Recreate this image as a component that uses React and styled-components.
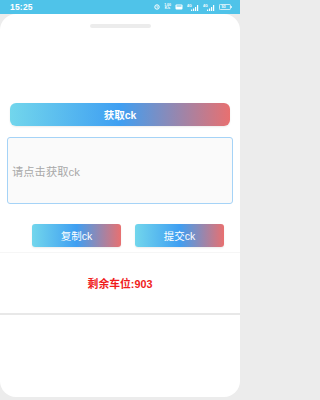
import React from 'react'
import styled, { createGlobalStyle } from 'styled-components'

const GlobalStyle = createGlobalStyle`
  html, body {
    margin: 0;
    padding: 0;
    background: #ececec;
    font-family: "Liberation Sans", "Noto Sans CJK SC", sans-serif;
  }
`

const Screen = styled.div`
  width: 240px;
  height: 400px;
  background: #ececec;
  overflow: hidden;
`

const StatusBar = styled.div`
  height: 14px;
  background: #4fc3e9;
  display: flex;
  align-items: center;
  justify-content: space-between;
  padding: 0 8px 0 10px;
  color: #fff;
  .time {
    font-size: 8.5px;
    font-weight: bold;
    letter-spacing: 0.2px;
  }
  .icons {
    display: flex;
    align-items: center;
    gap: 4px;
  }
  .speed {
    font-size: 3.5px;
    line-height: 3.5px;
    text-align: center;
    font-weight: bold;
  }
`

const Sheet = styled.div`
  background: #fff;
  height: 383px;
  border-radius: 16px;
  overflow: hidden;
  display: flex;
  flex-direction: column;
`

const Handle = styled.div`
  width: 61px;
  height: 4px;
  border-radius: 2px;
  background: #ececec;
  margin: 10px auto 0;
`

const GradientButton = styled.button`
  border: none;
  height: 23px;
  width: ${p => p.$width}px;
  border-radius: ${p => p.$radius}px;
  background: linear-gradient(90deg, #72d6ec 0%, #3f9ff2 50%, #e87070 100%);
  color: #fff;
  font-family: "Liberation Sans", "Noto Sans CJK SC", sans-serif;
  font-size: 10.5px;
  font-weight: ${p => (p.$bold ? 'bold' : 'normal')};
  padding: 0;
  box-shadow: 0 1px 2px rgba(0, 0, 0, 0.08);
`

const TopButton = styled(GradientButton)`
  margin: 75px 0 0 10px;
`

const Input = styled.div`
  margin: 11px 0 0 7px;
  width: 220px;
  height: 65px;
  border: 1px solid #a5d3f7;
  border-radius: 3px;
  background: #fafafa;
  display: flex;
  align-items: center;
  padding-left: 4px;
  color: #a8a8a8;
  font-size: 11.3px;
`

const ButtonRow = styled.div`
  display: flex;
  gap: 14px;
  padding-left: 32px;
  margin-top: 20px;
`

const InfoSection = styled.div`
  margin-top: 5px;
  border-top: 1px solid #f6f6f6;
  height: 61px;
  display: flex;
  justify-content: center;
  padding-top: 25px;
  box-sizing: border-box;
`

const Remain = styled.span`
  color: #f01c1c;
  font-size: 10.8px;
  font-weight: bold;
  line-height: 12px;
`

const Divider = styled.div`
  height: 2px;
  background: #e8e8e8;
`

function NetIcon() {
  return (
    <svg width="12" height="7" viewBox="0 0 12 7">
      <text x="0" y="3" fontSize="3.5" fill="#fff" fontFamily="Liberation Sans" fontWeight="bold">4G</text>
      <path d="M4 7h1.2V5.5H4zM6 7h1.2V4.5H6zM8 7h1.2V3H8zM10 7h1.2V1H10z" fill="#fff" />
    </svg>
  )
}

function StatusIcons() {
  return (
    <div className="icons">
      <svg width="6" height="6" viewBox="0 0 6 6">
        <circle cx="3" cy="3" r="2.2" fill="none" stroke="#fff" strokeWidth="1" />
        <path d="M3 1.8v1.4h1" stroke="#fff" strokeWidth="0.7" fill="none" />
      </svg>
      <div className="speed">1.00<br />K/s</div>
      <svg width="8" height="6" viewBox="0 0 8 6">
        <rect x="0.5" y="0.5" width="7" height="5" rx="1" fill="#fff" />
        <rect x="1.5" y="1.5" width="5" height="1" fill="#4fc3e9" />
      </svg>
      <NetIcon />
      <NetIcon />
      <svg width="13" height="6" viewBox="0 0 13 6">
        <rect x="0.4" y="0.4" width="11" height="5.2" rx="1" fill="none" stroke="#fff" strokeWidth="0.8" />
        <rect x="11.8" y="2" width="0.9" height="2" fill="#fff" />
        <text x="2.5" y="4.4" fontSize="3.8" fill="#fff" fontFamily="Liberation Sans" fontWeight="bold">93</text>
      </svg>
    </div>
  )
}

function App() {
  return (
    <Screen>
      <GlobalStyle />
      <StatusBar>
        <span className="time">15:25</span>
        <StatusIcons />
      </StatusBar>
      <Sheet>
        <Handle />
        <TopButton $width={220} $radius={6} $bold>获取ck</TopButton>
        <Input>请点击获取ck</Input>
        <ButtonRow>
          <GradientButton $width={89} $radius={3}>复制ck</GradientButton>
          <GradientButton $width={89} $radius={3}>提交ck</GradientButton>
        </ButtonRow>
        <InfoSection>
          <Remain>剩余车位:903</Remain>
        </InfoSection>
        <Divider />
      </Sheet>
    </Screen>
  )
}

export default App
